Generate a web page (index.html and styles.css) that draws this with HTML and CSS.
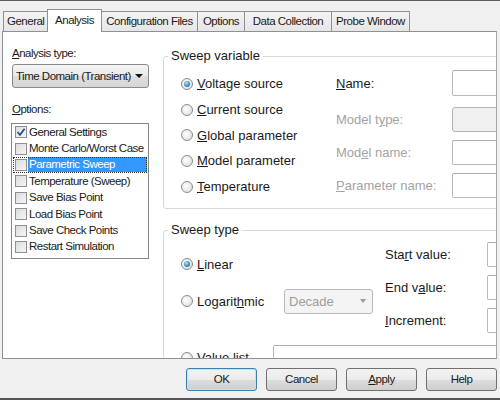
FILE: index.html
```html
<!DOCTYPE html>
<html>
<head>
<meta charset="utf-8">
<title>Simulation Settings</title>
<link rel="stylesheet" href="styles.css">
</head>
<body>
<div class="window">
  <div class="tabs">
    <div class="tab t-general">General</div>
    <div class="tab t-analysis active">Analysis</div>
    <div class="tab t-config">Configuration Files</div>
    <div class="tab t-options">Options</div>
    <div class="tab t-data">Data Collection</div>
    <div class="tab t-probe">Probe Window</div>
  </div>
  <div class="panel">
    <div class="left">
      <div class="lbl"><u>A</u>nalysis type:</div>
      <div class="combo"><span>Time Domain (Transient)</span><span class="arrow"></span></div>
      <div class="lbl opts"><u>O</u>ptions:</div>
      <ul class="listbox">
        <li><span class="cb"><svg width="10" height="10" viewBox="0 0 10 10"><path d="M1.5 5 L4 7.8 L8.6 1.8" fill="none" stroke="#2b4f8a" stroke-width="1.8"/></svg></span><span class="it">General Settings</span></li>
        <li><span class="cb"></span><span class="it">Monte Carlo/Worst Case</span></li>
        <li class="sel"><span class="cb"></span><span class="it">Parametric Sweep</span></li>
        <li><span class="cb"></span><span class="it">Temperature (Sweep)</span></li>
        <li><span class="cb"></span><span class="it">Save Bias Point</span></li>
        <li><span class="cb"></span><span class="it">Load Bias Point</span></li>
        <li><span class="cb"></span><span class="it">Save Check Points</span></li>
        <li><span class="cb"></span><span class="it">Restart Simulation</span></li>
      </ul>
    </div>
    <div class="right">
      <fieldset class="group g1">
        <legend>Sweep variable</legend>
        <div class="g1-body">
          <div class="radios">
            <div class="radio"><span class="rb on"></span><span><u>V</u>oltage source</span></div>
            <div class="radio"><span class="rb"></span><span><u>C</u>urrent source</span></div>
            <div class="radio"><span class="rb"></span><span><u>G</u>lobal parameter</span></div>
            <div class="radio"><span class="rb"></span><span><u>M</u>odel parameter</span></div>
            <div class="radio"><span class="rb"></span><span><u>T</u>emperature</span></div>
          </div>
          <div class="fields">
            <div class="field first"><span class="flbl"><u>N</u>ame:</span><span class="tb"></span></div>
            <div class="field"><span class="flbl dis">Model t<u>y</u>pe:</span><span class="tb disabled"></span></div>
            <div class="field"><span class="flbl dis">Mod<u>e</u>l name:</span><span class="tb"></span></div>
            <div class="field"><span class="flbl dis"><u>P</u>arameter name:</span><span class="tb"></span></div>
          </div>
        </div>
      </fieldset>
      <fieldset class="group g2">
        <legend>Sweep type</legend>
        <div class="g2-top">
          <div class="types">
            <div class="radio"><span class="rb on"></span><span><u>L</u>inear</span></div>
            <div class="radio log"><span class="rb"></span><span class="loglbl">Logarit<u>h</u>mic</span><div class="combo dis-combo"><span>Decade</span><span class="arrow"></span></div></div>
          </div>
          <div class="fields f2">
            <div class="field"><span class="flbl2">Sta<u>r</u>t value:</span><span class="tb"></span></div>
            <div class="field"><span class="flbl2">End v<u>a</u>lue:</span><span class="tb"></span></div>
            <div class="field"><span class="flbl2"><u>I</u>ncrement:</span><span class="tb"></span></div>
          </div>
        </div>
        <div class="radio vlist"><span class="rb"></span><span class="vlbl"><u>V</u>alue list</span><span class="tb wide"></span></div>
      </fieldset>
    </div>
  </div>
  <div class="buttons">
    <div class="btn default">OK</div>
    <div class="btn">Cancel</div>
    <div class="btn"><u>A</u>pply</div>
    <div class="btn">Help</div>
  </div>
</div>
</body>
</html>
```
FILE: styles.css
```css
* { box-sizing: border-box; }
html, body { margin: 0; padding: 0; }
body {
  width: 500px;
  height: 400px;
  background: #f0f0f0;
  font-family: "Liberation Sans", Arial, sans-serif;
  font-size: 11.5px;
  letter-spacing: -0.5px;
  color: #1a1a1a;
  overflow: hidden;
}
u { text-decoration: underline; text-underline-offset: 1px; }

.window {
  height: 400px;
  border-top: 1px solid #5c5c5c;
  border-bottom: 2px solid #555;
  display: flex;
  flex-direction: column;
}

/* tabs */
.tabs {
  height: 30px;
  display: flex;
  align-items: flex-end;
  padding-left: 3px;
}
.tab {
  height: 20px;
  line-height: 19px;
  padding: 0 3px;
  border: 1px solid #8d9097;
  border-bottom: none;
  margin-left: -1px;
  background: linear-gradient(#f3f3f3, #e6e6e6);
  white-space: nowrap;
  text-align: center;
}
.tab:first-child { margin-left: 0; }
.tab.active {
  position: relative;
  z-index: 1;
  height: 23px;
  line-height: 20px;
  background: #fff;
  margin-bottom: -1px;
}
.t-general { width: 45px; }
.t-analysis { width: 55px; }
.t-config { width: 97px; }
.t-options { width: 48px; }
.t-data { width: 88px; }
.t-probe { width: 79px; }

/* panel */
.panel {
  height: 328px;
  margin: 0 3px 0 2px;
  background: #fff;
  border: 1px solid #8d9097;
  border-right-color: #a6a6a6;
  display: flex;
  overflow: hidden;
}
.left {
  width: 146px;
  padding-left: 8px;
  flex: none;
}
.lbl {
  margin-top: 14px;
  line-height: 14px;
  padding-left: 1px;
}
.lbl.opts { margin-top: 14px; }
.combo {
  margin-top: 4px;
  height: 24px;
  width: 137px;
  margin-left: 1px;
  border: 1px solid #8a8a8a;
  border-radius: 3px;
  background: linear-gradient(#f5f5f5, #e9e9e9 50%, #dedede 51%, #d6d6d6);
  display: flex;
  align-items: center;
  justify-content: space-between;
  padding: 0 5px 0 3px;
  white-space: nowrap;
}
.arrow {
  width: 0;
  height: 0;
  border-left: 4px solid transparent;
  border-right: 4px solid transparent;
  border-top: 4px solid #111;
}
.listbox {
  list-style: none;
  margin: 7px 0 0 0;
  padding: 0;
  width: 138px;
  height: 136px;
  border: 1px solid #828790;
  background: #fff;
}
.listbox li {
  height: 16.4px;
  display: flex;
  align-items: center;
  padding-left: 3px;
  white-space: nowrap;
}
.cb {
  width: 12px;
  height: 12px;
  border: 1px solid #8e8f8f;
  background: linear-gradient(135deg, #dcdcdc, #f6f6f6);
  margin-right: 1px;
  flex: none;
  display: flex;
  align-items: center;
  justify-content: center;
}
.it { flex: 1; padding-left: 1px; line-height: 15px; }
.listbox li.sel {
  outline: 1px dotted #333;
  outline-offset: -1px;
  margin: 0 1px;
  padding-left: 2px;
}
.listbox li.sel .it { background: #3399ff; color: #fff; }

/* right side */
.right {
  flex: none;
  width: 360px;
  padding-left: 14px;
}
.group {
  margin: 0;
  padding: 0;
  border: 1px solid #d9d9d9;
  border-radius: 3px;
  font-size: 13px;
  letter-spacing: 0;
  min-width: 0;
}
.group legend {
  margin-left: 4px;
  padding: 0 3px;
  line-height: 16px;
}
.g1 { margin-top: 16px; }
.g1-body {
  height: 144px;
  display: flex;
  padding: 7px 0 0 17px;
}
.radios { width: 155px; flex: none; }
.radio {
  height: 25.7px;
  display: flex;
  align-items: center;
  white-space: nowrap;
}
.rb {
  width: 12px;
  height: 12px;
  border-radius: 50%;
  border: 1px solid #8c8c8c;
  background: radial-gradient(circle at 40% 40%, #ffffff, #d8d8d8);
  margin-right: 4px;
  flex: none;
  position: relative;
}
.rb.on::after {
  content: "";
  position: absolute;
  left: 2px;
  top: 2px;
  width: 6px;
  height: 6px;
  border-radius: 50%;
  background: radial-gradient(circle at 40% 35%, #b9e3fb, #3d8fcc 55%, #1f5a8f);
}
.fields { margin-top: -1px; display: flex; flex-direction: column; gap: 8px; }
.field { display: flex; align-items: center; height: 25px; }
.field.first { height: 26px; margin-bottom: 3px; }
.flbl { width: 116px; }
.dis { color: #a3a3a3; }
.tb {
  width: 60px;
  height: 100%;
  border: 1px solid #b5b8bd;
  border-top-color: #abadb3;
  background: #fff;
  border-radius: 2px;
}
.tb.disabled { background: #f0f0f0; border-color: #b3b3b3; border-radius: 3px; }

.g2 { margin-top: 13px; height: 200px; }
.g2-top { display: flex; padding: 5px 0 0 17px; }
.types { width: 204px; flex: none; padding-top: 8.5px; display: flex; flex-direction: column; gap: 12px; }
.types .radio { height: 25px; }
.loglbl { width: 87px; }
.dis-combo {
  margin: 0;
  width: 89px;
  height: 25px;
  border-color: #b8b8b8;
  background: #f4f4f4;
  color: #9d9d9d;
  padding: 0 6px 0 4px;
  font-size: 13px;
}
.dis-combo .arrow { border-top-color: #9a9a9a; border-width: 4px 3.5px 0; }
.flbl2 { width: 102px; }
.vlist { margin: 12px 0 0 17px; height: 25px; }
.vlbl { width: 77px; }
.tb.wide { width: 240px; }

/* buttons */
.buttons {
  flex: 1;
  display: flex;
  justify-content: flex-end;
  align-items: flex-start;
  gap: 9px;
  padding: 9px 3px 0 0;
}
.btn {
  width: 71px;
  height: 23px;
  line-height: 21px;
  text-align: center;
  border: 1px solid #707070;
  border-radius: 3px;
  background: linear-gradient(#f2f2f2, #ebebeb 50%, #dddddd 51%, #cfcfcf);
}
.btn.default {
  border-color: #3c7fb1;
  box-shadow: inset 0 0 0 1px #bfe4f8;
}
```
